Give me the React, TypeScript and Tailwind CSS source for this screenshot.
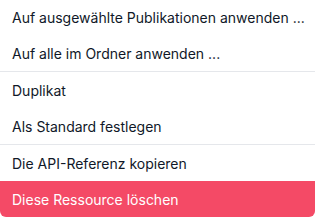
import React from 'react';

const groups = [
    ['Auf ausgewählte Publikationen anwenden ...', 'Auf alle im Ordner anwenden ...'],
    ['Duplikat', 'Als Standard festlegen'],
    ['Die API-Referenz kopieren'],
];

export default function App() {
    return (
        <div className="w-[315px] h-[217px] bg-white rounded-md overflow-hidden flex flex-col font-['Inter',sans-serif] text-[14px] text-gray-900">
            {groups.map((items, gi) => (
                <div key={gi} className={gi > 0 ? 'border-t border-gray-200' : ''}>
                    {items.map((label, i) => (
                        <div
                            key={label}
                            className={`flex items-center px-3 whitespace-nowrap ${gi === 0 && i === 0 ? 'h-[35px]' : 'h-9'}`}
                        >
                            {label}
                        </div>
                    ))}
                </div>
            ))}
            <div className="flex items-center px-3 h-9 bg-[#f44a66] text-white whitespace-nowrap">
                Diese Ressource löschen
            </div>
        </div>
    );
}
